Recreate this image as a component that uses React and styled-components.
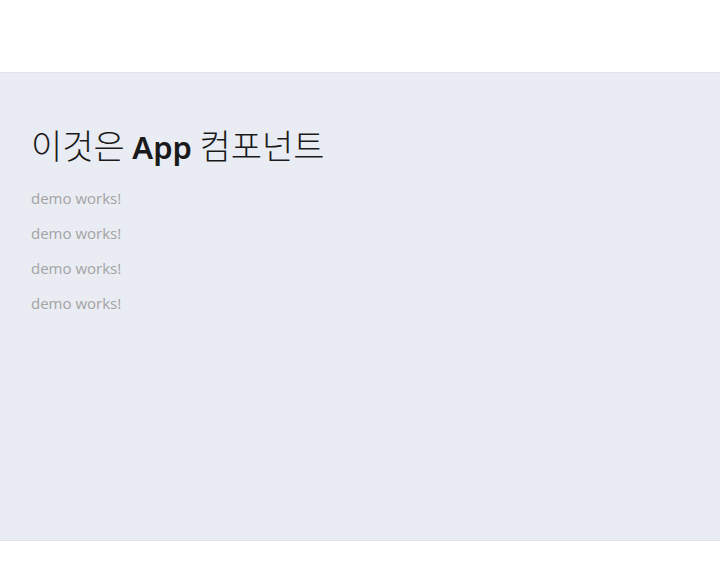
import styled, { createGlobalStyle } from "styled-components";

const GlobalStyle = createGlobalStyle`
    body {
        margin: 0;
        background: #ffffff;
        font-family: "Open Sans", "Noto Sans CJK KR", sans-serif;
    }
`;

const Header = styled.div`
    height: 72px;
    background: #ffffff;
`;

const Main = styled.main`
    background: #e9ecf3;
    height: 469px;
    box-sizing: border-box;
    padding: 49px 31px;
    box-shadow: inset 0 1px 0 rgba(0, 0, 0, 0.035), inset 0 -1px 0 rgba(0, 0, 0, 0.035);
`;

const Title = styled.h1`
    margin: 0 0 10px;
    font-family: "Noto Sans CJK KR", sans-serif;
    font-size: 34px;
    font-weight: 300;
    line-height: 48px;
    color: #1a1a1a;
`;

const Strong = styled.span`
    font-family: "Noto Sans", "Noto Sans CJK KR", sans-serif;
    font-size: 31px;
    font-weight: 600;
`;

const Line = styled.p`
    margin: 0;
    font-size: 15px;
    line-height: 35px;
    color: #a3a3a3;
`;

function App(){
    const lines = [1, 2, 3, 4];
    return <>
        <GlobalStyle />
        <Header />
        <Main>
            <Title>이것은 <Strong>App</Strong> 컴포넌트</Title>
            {lines.map(n => <Line key={n}>demo works!</Line>)}
        </Main>
    </>;
}

export default App;
